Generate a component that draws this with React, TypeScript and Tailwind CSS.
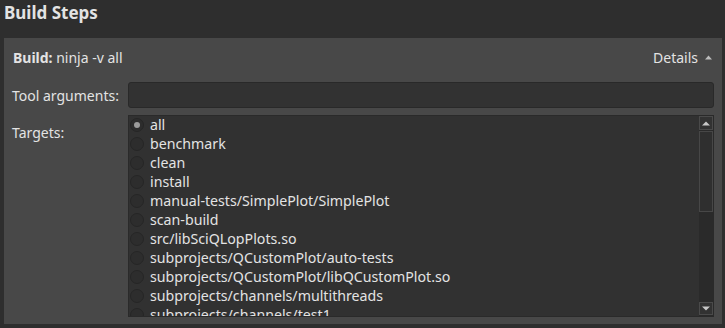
import { useState } from "react";

const targets = [
  "all",
  "benchmark",
  "clean",
  "install",
  "manual-tests/SimplePlot/SimplePlot",
  "scan-build",
  "src/libSciQLopPlots.so",
  "subprojects/QCustomPlot/auto-tests",
  "subprojects/QCustomPlot/libQCustomPlot.so",
  "subprojects/channels/multithreads",
  "subprojects/channels/test1",
];

function Radio({ checked }: { checked: boolean }) {
  return (
    <span className="w-[14px] h-[14px] rounded-full bg-[#2d2d2d] border border-[#262626] flex items-center justify-center shrink-0">
      {checked && <span className="w-[6px] h-[6px] rounded-full bg-[#9c9c9c]" />}
    </span>
  );
}

export default function App() {
  const [selected, setSelected] = useState("all");

  return (
    <div
      className="w-[725px] h-[328px] bg-[#2e2e2e] text-[#e3e3e3] overflow-hidden flex flex-col"
      style={{ fontFamily: '"Noto Sans", "Open Sans", sans-serif' }}
    >
      {/* header */}
      <div className="h-[38px] pl-[4px] pt-[1px] text-[17px] font-bold leading-[24px]">Build Steps</div>

      {/* build step panel */}
      <div className="ml-[4px] mr-[3px] h-[286px] bg-[#484848] flex flex-col px-[8px] pt-[7px]">
        <div className="flex items-center justify-between h-[24px] pl-[1px] text-[14px]">
          <div>
            <span className="font-bold">Build:</span> ninja -v all
          </div>
          <div className="flex items-center gap-[7px] pr-[2px]">
            <span>Details</span>
            <svg width="7" height="5" viewBox="0 0 7 5">
              <path d="M0 4.5 L3.5 0.5 L7 4.5 Z" fill="#bdbdbd" />
            </svg>
          </div>
        </div>

        <div className="flex items-center mt-[13px] h-[26px] text-[14px]">
          <span className="w-[116px] shrink-0">Tool arguments:</span>
          <div className="flex-1 h-[26px] bg-[#323232] border border-[#292929] rounded-[3px]" />
        </div>

        <div className="flex mt-[7px] text-[14px]">
          <span className="w-[116px] shrink-0 pt-[7px]">Targets:</span>
          <div className="flex-1 h-[202px] bg-[#313131] border border-[#2a2a2a] flex overflow-hidden">
            <div className="flex-1 flex flex-col -mt-[1px] pl-[1px]">
              {targets.map((t) => (
                <div
                  key={t}
                  className="flex items-center gap-[6px] h-[19px] shrink-0 cursor-default"
                  onClick={() => setSelected(t)}
                >
                  <Radio checked={selected === t} />
                  <span className="leading-[19px] text-[14.2px]">{t}</span>
                </div>
              ))}
            </div>
            {/* scrollbar */}
            <div className="w-[14px] bg-[#2a2a2a] flex flex-col">
              <div className="h-[14px] border border-[#4a4a4a] bg-[#323232] flex items-center justify-center">
                <svg width="8" height="5" viewBox="0 0 8 5">
                  <path d="M0 4.5 L4 0.5 L8 4.5 Z" fill="#c8c8c8" />
                </svg>
              </div>
              <div className="h-[81px] mt-[1px] border border-[#474747] bg-[#2f2f2f]" />
              <div className="flex-1" />
              <div className="h-[13px] border border-[#4a4a4a] bg-[#323232] flex items-center justify-center mb-[1px]">
                <svg width="8" height="5" viewBox="0 0 8 5">
                  <path d="M0 0.5 L4 4.5 L8 0.5 Z" fill="#c8c8c8" />
                </svg>
              </div>
            </div>
          </div>
        </div>
      </div>
    </div>
  );
}
